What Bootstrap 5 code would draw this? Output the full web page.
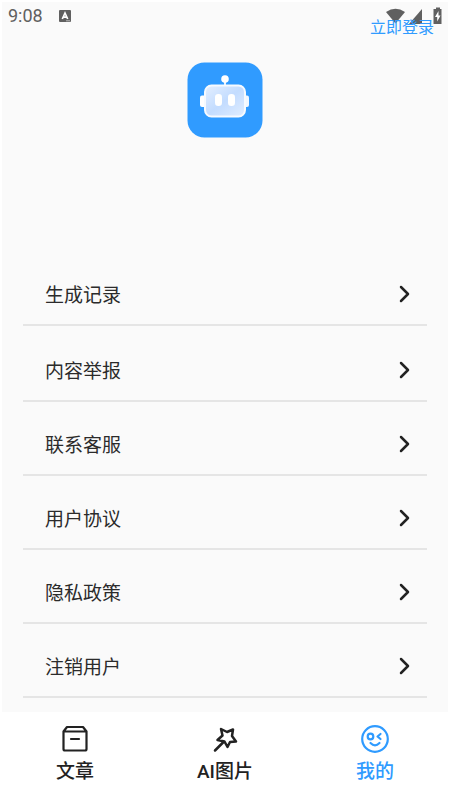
<!DOCTYPE html>
<html lang="zh-CN">
<head>
<meta charset="utf-8">
<meta name="viewport" content="width=device-width, initial-scale=1">
<title>我的</title>
<link href="https://cdn.jsdelivr.net/npm/bootstrap@5.3.0/dist/css/bootstrap.min.css" rel="stylesheet">
<style>
  body { background: #fff; color: #2b2b2b; font-family: Roboto, "Noto Sans CJK SC", sans-serif; }
  .screen { background: #fafafa; margin: 2px 2px 0; }
  .status { height: 28px; color: #606060; font-size: 18px; line-height: 28px; padding: 0 6px; }
  .login { color: #2f9bff; font-size: 16px; line-height: 24px; margin: 14px 14px 0 0; z-index: 2; }
  .logo { margin-top: 22px; margin-bottom: 114px; }
  .menu { padding: 0 21px; font-family: "Noto Sans CJK SC", sans-serif; }
  .menu-item { height: 74px; padding: 11px 15px 0 22px; border-bottom: 2px solid #e5e5e5; color: #2b2b2b; font-size: 19px; line-height: 28px; }
  .menu-item:first-child { margin-bottom: 2px; }
  .tabs { background: #fff; height: 88px; padding-top: 11px; }
  .tab { color: #222; font-size: 19px; line-height: 28px; font-weight: 500; gap: 3px; }
  .tab.current { color: #2f9bff; }
</style>
</head>
<body>
<div class="d-flex flex-column min-vh-100">
  <main class="screen flex-grow-1 d-flex flex-column">
    <header class="position-relative d-flex justify-content-end">
      <div class="status position-absolute top-0 start-0 w-100 d-flex align-items-center">
        <span>9:08</span>
        <svg class="ms-3" width="13" height="13" viewBox="0 0 13 13" aria-hidden="true"><rect width="12" height="12" rx="1" fill="#606060"/><path d="M3.300 9 6 3l2.700 6M4.300 7.200h3.400" fill="none" stroke="#fff" stroke-width="1.700"/><path d="M7 10.800h4" stroke="#bbb"/></svg>
        <svg class="ms-auto" width="56" height="19" viewBox="0 0 56 19" aria-hidden="true" fill="#606060"><path d="M0 5Q9.500-1.500 19 5L9.500 16.500z"/><path d="M36 2v15H23z"/><path d="M48 2h2V.500h4V2h1.500v15H47.500V2z"/><path d="m52.500 4-3.500 6h2.200v4.500L54.500 8.500h-2z" fill="#fff"/></svg>
      </div>
      <a href="#login" class="login position-relative text-decoration-none">立即登录</a>
    </header>
    <svg class="logo align-self-center" width="76" height="76" viewBox="0 0 76 76" role="img" aria-label="机器人">
      <defs><linearGradient id="face" x1="0" y1="0" x2="1" y2="1"><stop offset="0" stop-color="#e4efff"/><stop offset=".5" stop-color="#c3dcff"/><stop offset="1" stop-color="#e0edff"/></linearGradient></defs>
      <rect x=".5" y=".5" width="75" height="75" rx="17" fill="#309bff"/>
      <path d="M38 17v7" stroke="#e7f2ff" stroke-width="2"/><circle cx="38" cy="17" r="3.800" fill="#fff"/>
      <rect x="13" y="33.500" width="8" height="11.500" rx="2" fill="#fff"/><rect x="54" y="33.500" width="8" height="11.500" rx="2" fill="#f1f7ff"/>
      <rect x="18" y="23.500" width="40" height="31" rx="6.500" fill="url(#face)" stroke="#f6faff" stroke-width="2"/>
      <rect x="28" y="32" width="7" height="12" rx="3.300" fill="#fff"/><rect x="41" y="32" width="7" height="12" rx="3.300" fill="#fff"/>
    </svg>
    <svg class="d-none" aria-hidden="true"><symbol id="chevron" viewBox="0 0 14 20"><path d="m3 3 7 7-7 7" fill="none" stroke="#222" stroke-width="2.500" stroke-linecap="round" stroke-linejoin="round"/></symbol></svg>
    <nav class="menu" aria-label="菜单">
      <a href="#history" class="menu-item d-flex align-items-center justify-content-between text-decoration-none">生成记录<svg width="14" height="20" aria-hidden="true"><use href="#chevron"/></svg></a>
      <a href="#report" class="menu-item d-flex align-items-center justify-content-between text-decoration-none">内容举报<svg width="14" height="20" aria-hidden="true"><use href="#chevron"/></svg></a>
      <a href="#service" class="menu-item d-flex align-items-center justify-content-between text-decoration-none">联系客服<svg width="14" height="20" aria-hidden="true"><use href="#chevron"/></svg></a>
      <a href="#terms" class="menu-item d-flex align-items-center justify-content-between text-decoration-none">用户协议<svg width="14" height="20" aria-hidden="true"><use href="#chevron"/></svg></a>
      <a href="#privacy" class="menu-item d-flex align-items-center justify-content-between text-decoration-none">隐私政策<svg width="14" height="20" aria-hidden="true"><use href="#chevron"/></svg></a>
      <a href="#cancel" class="menu-item d-flex align-items-center justify-content-between text-decoration-none">注销用户<svg width="14" height="20" aria-hidden="true"><use href="#chevron"/></svg></a>
    </nav>
  </main>
  <nav class="tabs d-flex sticky-bottom" aria-label="主导航">
    <a href="#articles" class="tab col d-flex flex-column align-items-center text-decoration-none">
      <svg width="32" height="32" viewBox="0 0 32 32" fill="none" stroke="currentColor" stroke-width="2.200" stroke-linejoin="round" stroke-linecap="round" aria-hidden="true"><path d="M4.500 8.500 8 4h16l3.500 4.500V26q0 1.500-1.500 1.500H6Q4.500 27.500 4.500 26zM4.500 8.500h23M12 16h8"/></svg>
      <span>文章</span>
    </a>
    <a href="#images" class="tab col d-flex flex-column align-items-center text-decoration-none">
      <svg width="32" height="32" viewBox="0 0 32 32" fill="none" stroke="currentColor" stroke-width="2.500" stroke-linejoin="round" stroke-linecap="round" aria-hidden="true"><path d="M12 6 18 9 24 6.500 23 13 27 18.500 21 19 18.500 24 15.500 18.500 8.500 17 13.500 12.500zM14.500 19 6 27.500"/></svg>
      <span>AI图片</span>
    </a>
    <a href="#mine" class="tab current col d-flex flex-column align-items-center text-decoration-none" aria-current="page">
      <svg width="32" height="32" viewBox="0 0 32 32" fill="none" stroke="currentColor" stroke-width="2.200" stroke-linejoin="round" stroke-linecap="round" aria-hidden="true"><circle cx="16" cy="16" r="12.800"/><circle cx="11.500" cy="13.500" r="2.800"/><path d="m21.500 11-3 2.500 3 2.500M11.500 20q4.500 4.500 9 0"/></svg>
      <span>我的</span>
    </a>
  </nav>
</div>
<script src="https://cdn.jsdelivr.net/npm/bootstrap@5.3.0/dist/js/bootstrap.bundle.min.js"></script>
</body>
</html>
